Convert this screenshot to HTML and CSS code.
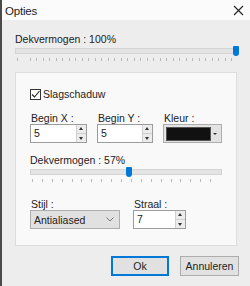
FILE: index.html
```html
<!DOCTYPE html>
<html lang="nl">
<head>
    <meta charset="UTF-8">
    <title>Opties</title>
    <link rel="stylesheet" href="styles.css">
</head>
<body>
<div class="window">
    <div class="titlebar">
        <span class="title">Opties</span>
        <svg class="close" width="11" height="11" viewBox="0 0 11 11">
            <path d="M1 1 L10 10 M10 1 L1 10" stroke="#222" stroke-width="1.1"/>
        </svg>
    </div>
    <div class="content">
        <div class="label">Dekvermogen : 100%</div>
        <div class="slider wide">
            <div class="track"></div>
            <div class="thumb" style="left: 100%"></div>
            <div class="ticks"></div>
        </div>

        <div class="group">
            <label class="check">
                <span class="box">
                    <svg width="11" height="11" viewBox="0 0 11 11">
                        <path d="M2 5.5 L4.5 8 L9.5 2" fill="none" stroke="#222" stroke-width="1.1"/>
                    </svg>
                </span>
                Slagschaduw
            </label>

            <div class="fields">
                <div class="field">
                    <div class="label">Begin X :</div>
                    <div class="spin w57"><span class="val">5</span><span class="arrows"><i class="up"></i><i class="down"></i></span></div>
                </div>
                <div class="field">
                    <div class="label">Begin Y :</div>
                    <div class="spin w56"><span class="val">5</span><span class="arrows"><i class="up"></i><i class="down"></i></span></div>
                </div>
                <div class="field">
                    <div class="label">Kleur :</div>
                    <div class="color"><span class="swatch"></span><i class="drop"></i></div>
                </div>
            </div>

            <div class="label opacity">Dekvermogen : 57%</div>
            <div class="slider narrow">
                <div class="track"></div>
                <div class="thumb" style="left: 52%"></div>
                <div class="ticks"></div>
            </div>

            <div class="fields bottom">
                <div class="field">
                    <div class="label">Stijl :</div>
                    <div class="combo"><span>Antialiased</span>
                        <svg width="8" height="5" viewBox="0 0 8 5"><path d="M0.5 0.5 L4 4 L7.5 0.5" fill="none" stroke="#777" stroke-width="1"/></svg>
                    </div>
                </div>
                <div class="field">
                    <div class="label">Straal :</div>
                    <div class="spin w53"><span class="val">7</span><span class="arrows"><i class="up"></i><i class="down"></i></span></div>
                </div>
            </div>
        </div>

        <div class="buttons">
            <button class="btn default">Ok</button>
            <button class="btn">Annuleren</button>
        </div>
    </div>
</div>
</body>
</html>
```

FILE: styles.css
```css
body {
    margin: 0;
    background: #4a4a4a;
    font-family: "Liberation Sans", Arial, sans-serif;
    font-size: 10.5px;
    color: #222;
}
.window {
    margin-left: 2px;
    width: 248px;
    height: 286px;
    background: #ededed;
    overflow: hidden;
}
.titlebar {
    height: 20px;
    background: #fbfbfb;
    display: flex;
    justify-content: space-between;
    align-items: center;
    padding: 0 6px 0 3px;
}
.title {
    font-size: 11.5px;
    letter-spacing: -0.2px;
    margin-top: 1px;
}
.content {
    padding: 13px 11px 0 13px;
}
.label {
    height: 12px;
    line-height: 12px;
}
.slider {
    position: relative;
    height: 16px;
    margin-top: 1px;
}
.slider.wide { width: 222px; }
.slider.narrow { width: 192px; }
.track {
    position: absolute;
    left: 0;
    right: 0;
    top: 2px;
    height: 4px;
    background: #e4e4e4;
    border: 1px solid #d4d4d4;
}
.thumb {
    position: absolute;
    top: 0;
    width: 6px;
    height: 10px;
    margin-left: -4px;
    background: #0078d7;
    border-radius: 1px 1px 3px 3px;
}
.ticks {
    position: absolute;
    left: 2px;
    right: 2px;
    top: 12px;
    height: 3px;
    background: repeating-linear-gradient(to right, #b8b8b8 0, #b8b8b8 1px, transparent 1px, transparent 6.5px);
}
.slider.narrow .ticks {
    background: repeating-linear-gradient(to right, #b8b8b8 0, #b8b8b8 1px, transparent 1px, transparent 9.9px);
}
.group {
    margin-top: 10px;
    width: 222px;
    height: 174px;
    background: #f9f9f9;
    border: 1px solid #dddddd;
    box-sizing: border-box;
    padding: 15px 0 0 14px;
}
.check {
    display: flex;
    align-items: center;
    gap: 2px;
    height: 12px;
}
.box {
    width: 11px;
    height: 11px;
    border: 1px solid #333;
    box-sizing: border-box;
    display: flex;
    align-items: center;
    justify-content: center;
    background: #fff;
}
.box svg { margin: -1px; }
.fields {
    display: flex;
    gap: 10px;
    margin-top: 12px;
}
.field .label {
    padding-left: 1px;
}
.spin {
    height: 19px;
    border: 1px solid #9c9c9c;
    background: #fff;
    box-sizing: border-box;
    display: flex;
    justify-content: space-between;
}
.w57 { width: 57px; }
.w56 { width: 56px; }
.w53 { width: 53px; }
.val {
    padding-left: 3px;
    line-height: 17px;
}
.arrows {
    width: 9px;
    display: flex;
    flex-direction: column;
    border-left: 1px solid #cfcfcf;
}
.arrows i {
    flex: 1;
    background: #ececec;
    position: relative;
}
.arrows i + i { border-top: 1px solid #cfcfcf; }
.arrows i::after {
    content: "";
    position: absolute;
    left: 2px;
    top: 2px;
    border-left: 2.5px solid transparent;
    border-right: 2.5px solid transparent;
}
.arrows .up::after { border-bottom: 3px solid #333; }
.arrows .down::after { border-top: 3px solid #333; top: 3px; }
.color {
    width: 59px;
    height: 19px;
    border: 1px solid #adadad;
    background: #e3e3e3;
    box-sizing: border-box;
    display: flex;
    align-items: center;
    padding: 0 4px 0 2px;
    justify-content: space-between;
}
.swatch {
    width: 43px;
    height: 12px;
    background: #111;
    border: 1px solid #555;
}
.drop {
    border-left: 2px solid transparent;
    border-right: 2px solid transparent;
    border-top: 2.5px solid #333;
}
.opacity {
    margin-top: 11px;
}
.bottom {
    margin-top: 15px;
    gap: 13px;
}
.combo {
    width: 90px;
    height: 19px;
    border: 1px solid #adadad;
    background: #e1e1e1;
    box-sizing: border-box;
    display: flex;
    align-items: center;
    justify-content: space-between;
    padding: 0 5px 0 3px;
}
.buttons {
    display: flex;
    justify-content: flex-end;
    gap: 11px;
    margin-top: 10px;
}
.btn {
    width: 59px;
    height: 20px;
    font: inherit;
    color: #222;
    background: #e1e1e1;
    border: 1px solid #adadad;
    padding: 0;
}
.btn.default {
    width: 58px;
    border: 2px solid #0078d7;
}
```
